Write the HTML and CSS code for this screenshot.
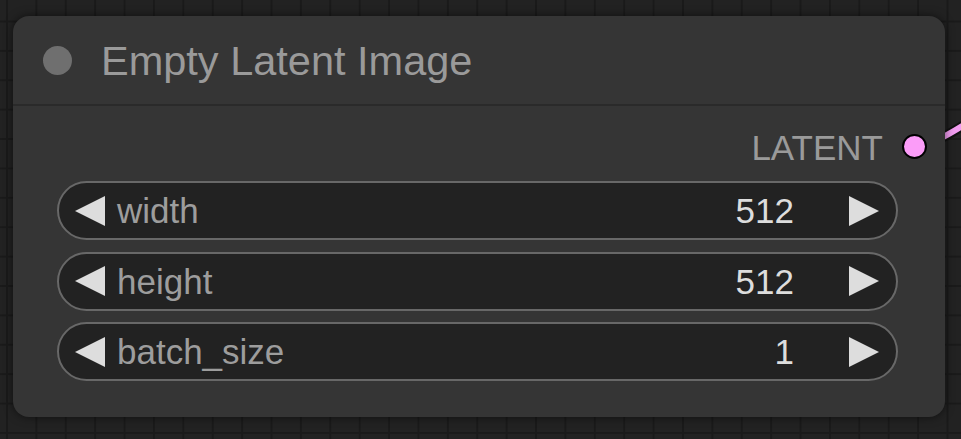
FILE: index.html
```html
<!DOCTYPE html>
<html>
<head>
<meta charset="utf-8">
<link rel="stylesheet" href="styles.css">
</head>
<body>
<div class="canvas">
  <svg class="link" width="60" height="60" viewBox="0 0 60 60">
    <path d="M0 48 C 18 46, 32 38, 60 20" stroke="#111" stroke-width="10" fill="none"/>
    <path d="M0 48 C 18 46, 32 38, 60 20" stroke="#f29cf0" stroke-width="6" fill="none"/>
  </svg>
  <div class="node">
    <div class="title">
      <span class="title-dot"></span>
      <span class="title-text">Empty Latent Image</span>
    </div>
    <div class="body">
      <div class="output">
        <span class="output-label">LATENT</span>
        <span class="output-dot"></span>
      </div>
      <div class="widgets">
        <div class="widget">
          <svg class="arrow" width="30" height="30" viewBox="0 0 30 30"><polygon points="0,15 30,0 30,30"/></svg>
          <span class="label">width</span>
          <span class="value">512</span>
          <svg class="arrow" width="30" height="30" viewBox="0 0 30 30"><polygon points="30,15 0,0 0,30"/></svg>
        </div>
        <div class="widget">
          <svg class="arrow" width="30" height="30" viewBox="0 0 30 30"><polygon points="0,15 30,0 30,30"/></svg>
          <span class="label">height</span>
          <span class="value">512</span>
          <svg class="arrow" width="30" height="30" viewBox="0 0 30 30"><polygon points="30,15 0,0 0,30"/></svg>
        </div>
        <div class="widget">
          <svg class="arrow" width="30" height="30" viewBox="0 0 30 30"><polygon points="0,15 30,0 30,30"/></svg>
          <span class="label">batch_size</span>
          <span class="value">1</span>
          <svg class="arrow" width="30" height="30" viewBox="0 0 30 30"><polygon points="30,15 0,0 0,30"/></svg>
        </div>
      </div>
    </div>
  </div>
</div>
</body>
</html>
```

FILE: styles.css
```css
html, body {
  margin: 0;
  padding: 0;
}
body {
  width: 961px;
  height: 439px;
  overflow: hidden;
  background-color: #222222;
  background-image:
    linear-gradient(to right, #1a1a1a 0, #1a1a1a 2px, transparent 2px),
    linear-gradient(to bottom, #1a1a1a 0, #1a1a1a 2px, transparent 2px);
  background-size: 29.4px 29.4px;
  background-position: 6px 20.5px;
  font-family: "Liberation Sans", Arial, sans-serif;
}
.canvas {
  position: relative;
  width: 961px;
  height: 439px;
  padding: 16px 0 0 13px;
  box-sizing: border-box;
}
.link {
  position: absolute;
  left: 915px;
  top: 98px;
}
.node {
  position: relative;
  width: 932px;
  height: 401px;
  background: #353535;
  border-radius: 16px;
  box-shadow: 0 0 10px rgba(0, 0, 0, 0.55);
  display: flex;
  flex-direction: column;
}
.title {
  height: 88px;
  border-bottom: 2px solid #2a2a2a;
  display: flex;
  align-items: center;
  padding-left: 30px;
}
.title-dot {
  width: 29px;
  height: 29px;
  border-radius: 50%;
  background: #6f6f6f;
}
.title-text {
  margin-left: 29px;
  font-size: 41.5px;
  color: #9a9a9a;
  line-height: 1;
  margin-top: 2px;
}
.body {
  padding-top: 20px;
}
.output {
  height: 40px;
  display: flex;
  align-items: center;
  justify-content: flex-end;
  padding-right: 18px;
}
.output-label {
  font-size: 35px;
  color: #9a9a9a;
  line-height: 1;
  margin-right: 19px;
  margin-top: 2px;
}
.output-dot {
  width: 21px;
  height: 21px;
  border-radius: 50%;
  background: #fb9cf8;
  border: 2.5px solid #000;
}
.widgets {
  margin-top: 15px;
  display: flex;
  flex-direction: column;
  gap: 11.5px;
  padding: 0 47px 0 44px;
}
.widget {
  height: 59px;
  box-sizing: border-box;
  border: 2.5px solid #686868;
  border-radius: 30px;
  background: #222222;
  display: flex;
  align-items: center;
  padding: 0 17px 0 16px;
  font-size: 35px;
  line-height: 1;
}
.arrow {
  fill: #dddddd;
  flex: none;
}
.label {
  margin-left: 12px;
  color: #9d9d9d;
}
.value {
  margin-left: auto;
  margin-right: 55px;
  color: #dddddd;
}
```
